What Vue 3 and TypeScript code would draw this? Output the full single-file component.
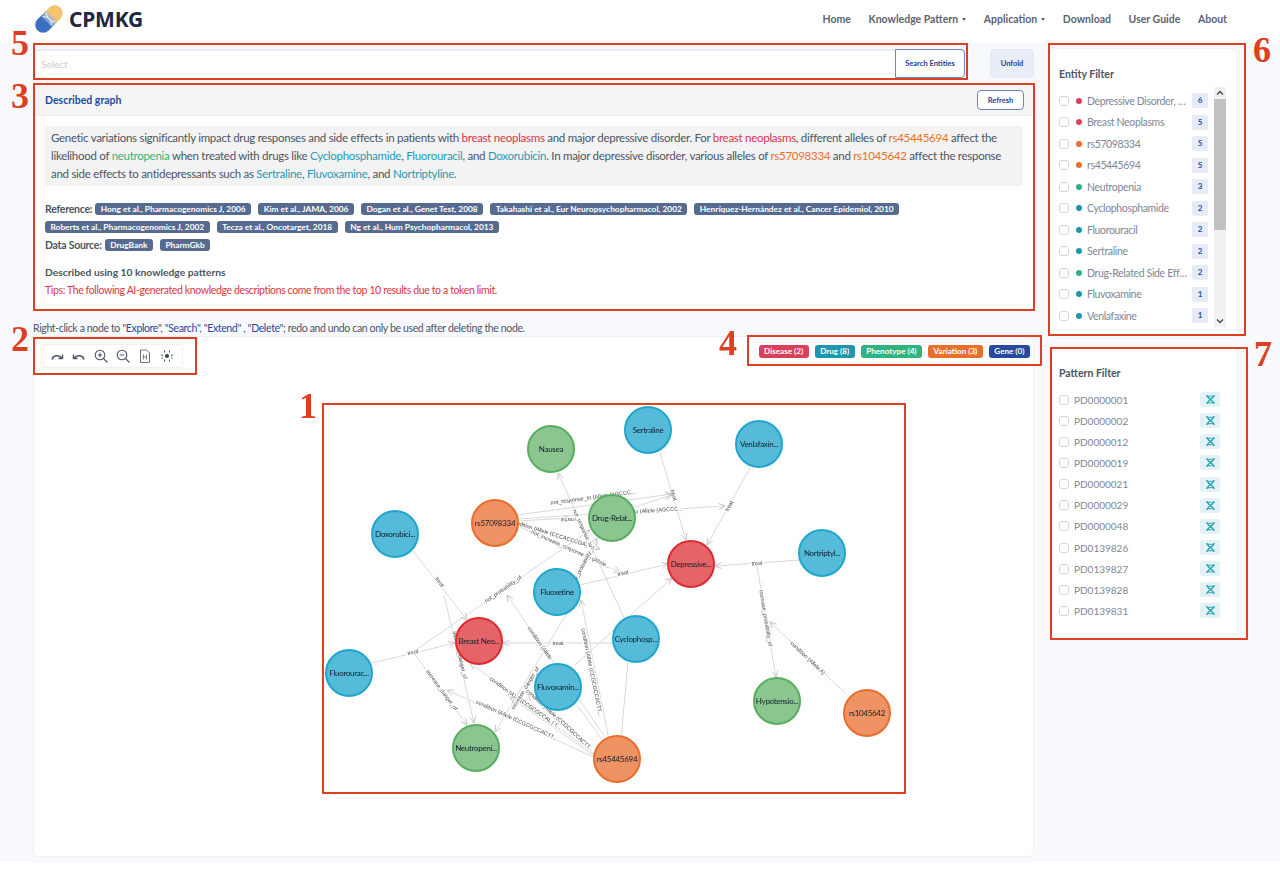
<script setup lang="ts">
type Kind = 'disease' | 'drug' | 'phenotype' | 'variation'

const navItems = [
  { label: 'Home', caret: false },
  { label: 'Knowledge Pattern', caret: true },
  { label: 'Application', caret: true },
  { label: 'Download', caret: false },
  { label: 'User Guide', caret: false },
  { label: 'About', caret: false },
]

const refRowOne = [
  'Hong et al., Pharmacogenomics J, 2006',
  'Kim et al., JAMA, 2006',
  'Dogan et al., Genet Test, 2008',
  'Takahashi et al., Eur Neuropsychopharmacol, 2002',
  'Henríquez-Hernández et al., Cancer Epidemiol, 2010',
]
const refRowTwo = [
  'Roberts et al., Pharmacogenomics J, 2002',
  'Tecza et al., Oncotarget, 2018',
  'Ng et al., Hum Psychopharmacol, 2013',
]

const legend = [
  { label: 'Disease (2)', cls: 'disease' },
  { label: 'Drug (8)', cls: 'drug' },
  { label: 'Phenotype (4)', cls: 'phenotype' },
  { label: 'Variation (3)', cls: 'variation' },
  { label: 'Gene (0)', cls: 'gene' },
]

const entities: { name: string; kind: Kind; count: number }[] = [
  { name: 'Depressive Disorder, …', kind: 'disease', count: 6 },
  { name: 'Breast Neoplasms', kind: 'disease', count: 5 },
  { name: 'rs57098334', kind: 'variation', count: 5 },
  { name: 'rs45445694', kind: 'variation', count: 5 },
  { name: 'Neutropenia', kind: 'phenotype', count: 3 },
  { name: 'Cyclophosphamide', kind: 'drug', count: 2 },
  { name: 'Fluorouracil', kind: 'drug', count: 2 },
  { name: 'Sertraline', kind: 'drug', count: 2 },
  { name: 'Drug-Related Side Eff…', kind: 'phenotype', count: 2 },
  { name: 'Fluvoxamine', kind: 'drug', count: 1 },
  { name: 'Venlafaxine', kind: 'drug', count: 1 },
]

const patterns = [
  'PD0000001', 'PD0000002', 'PD0000012', 'PD0000019', 'PD0000021', 'PD0000029',
  'PD0000048', 'PD0139826', 'PD0139827', 'PD0139828', 'PD0139831',
]

// Graph coordinates are page-relative values minus the origin of the canvas (33, 336)
const OX = 33
const OY = 336
const nodeStyles: Record<Kind, { fill: string; stroke: string }> = {
  disease: { fill: '#e56467', stroke: '#dc2a2e' },
  drug: { fill: '#55bbd8', stroke: '#1fa6cc' },
  phenotype: { fill: '#8bc58f', stroke: '#58ad5e' },
  variation: { fill: '#ef9364', stroke: '#e96d2b' },
}
const nodes = ([
  ['Nausea', 551, 449, 'phenotype'],
  ['Sertraline', 648, 430, 'drug'],
  ['Venlafaxin...', 759, 444, 'drug'],
  ['rs57098334', 495, 523, 'variation'],
  ['Drug-Relat...', 612, 518, 'phenotype'],
  ['Doxorubici...', 395, 534, 'drug'],
  ['Depressive...', 691, 564, 'disease'],
  ['Nortriptyl...', 822, 553, 'drug'],
  ['Fluoxetine', 557, 592, 'drug'],
  ['Cyclophosp...', 636, 639, 'drug'],
  ['Breast Neo...', 479, 641, 'disease'],
  ['Fluorourac...', 349, 673, 'drug'],
  ['Fluvoxamin...', 558, 687, 'drug'],
  ['Hypotensio...', 777, 701, 'phenotype'],
  ['rs1045642', 867, 713, 'variation'],
  ['Neutropeni...', 476, 748, 'phenotype'],
  ['rs45445694', 617, 759, 'variation'],
] as [string, number, number, Kind][]).map(([label, x, y, kind]) => ({
  label,
  x: x - OX,
  y: y - OY,
  ...nodeStyles[kind],
}))

// x1, y1, x2, y2, label, label x, label y
const rawEdges: [number, number, number, number, string, number, number][] = [
  [660, 453, 686, 540, 'treat', 674, 495],
  [750, 468, 707, 545, 'treat', 729, 506],
  [800, 560, 715, 566, 'treat', 757, 563],
  [757, 566, 776, 677, 'increase_probability_of', 766, 618],
  [845, 693, 770, 622, 'condition (Allele A)', 808, 658],
  [517, 515, 672, 494, 'not_response_to (Allele (AGCCC...', 593, 497],
  [635, 507, 672, 495, '', 0, 0],
  [518, 519, 725, 506, 'not_response_to (Allele (AGCCC...', 640, 511],
  [518, 521, 570, 518, 'increa', 568, 519],
  [520, 524, 600, 549, 'condition (Allele (CCCACCCGA)T...', 553, 534],
  [520, 527, 620, 572, 'not_increase_response_to (Allele...', 571, 549],
  [580, 585, 668, 564, 'treat', 623, 573],
  [575, 665, 672, 578, '', 0, 0],
  [413, 551, 467, 620, 'treat', 440, 582],
  [444, 595, 474, 723, 'increase_danger_of', 460, 655],
  [372, 663, 455, 643, 'treat', 413, 652],
  [413, 652, 467, 725, 'increase_danger_of', 442, 690],
  [613, 643, 503, 643, 'treat', 558, 643],
  [413, 652, 590, 530, 'not_probability_of', 503, 589],
  [570, 590, 597, 538, 'increase_probability_of', 580, 570],
  [625, 620, 558, 473, 'not_response_to', 583, 528],
  [567, 613, 495, 732, 'increase_danger_of', 525, 688],
  [605, 737, 507, 595, 'condition (Allele', 540, 643],
  [610, 745, 581, 600, 'condition (Allele (CCGCGCCACTT...', 592, 672],
  [600, 758, 470, 663, 'condition (A)', 503, 687],
  [600, 760, 528, 694, 'condition (Allele (CCGCGCCACTT...', 560, 720],
  [600, 760, 510, 697, '(CCGCGCCAL ( T...', 541, 714],
  [600, 760, 447, 690, 'condition (Allele (CCGCGCCACTT...', 517, 720],
  [577, 705, 608, 748, '', 0, 0],
  [628, 662, 620, 750, '', 0, 0],
]

const edges = rawEdges.map(([a, b, c, d, label, lx, ly]) => {
  const x1 = a - OX
  const y1 = b - OY
  const x2 = c - OX
  const y2 = d - OY
  const ang = Math.atan2(y2 - y1, x2 - x1)
  const head = 7
  const spread = 0.45
  const p = (s: number) =>
    `${x2 - head * Math.cos(ang + s)},${y2 - head * Math.sin(ang + s)}`
  let deg = (ang * 180) / Math.PI
  if (deg > 90) deg -= 180
  if (deg < -90) deg += 180
  return {
    x1,
    y1,
    x2,
    y2,
    arrow: `${p(spread)} ${x2},${y2} ${p(-spread)}`,
    label,
    transform: `translate(${lx - OX} ${ly - OY}) rotate(${deg.toFixed(1)})`,
  }
})
</script>

<template>
  <div class="page">
    <header class="nav">
      <div class="brand">
        <svg class="logo" width="32" height="28" viewBox="0 0 36 32" aria-hidden="true">
          <g transform="rotate(-45 18 16)">
            <path d="M18 7H8.500a9 9 0 0 0 0 18H18Z" fill="#3b6fc4" />
            <path d="M18 7h9.500a9 9 0 0 1 0 18H18Z" fill="#f4c271" />
            <path d="M14 7h8v18h-8Z" fill="#9bb4d8" opacity=".75" />
            <path d="M15 9c4 3 4 11 0 14M21 9c-4 3-4 11 0 14" fill="none" stroke="#fff" stroke-width="1" />
          </g>
        </svg>
        <span class="brand-name">CPMKG</span>
      </div>
      <nav class="nav-links">
        <span v-for="item in navItems" :key="item.label" class="nav-link" :class="{ caret: item.caret }">{{ item.label }}</span>
      </nav>
    </header>

    <main class="main">
      <section class="left">
        <div class="search-row">
          <div class="search">
            <span class="placeholder">Select</span>
            <button class="search-btn" type="button">Search Entities</button>
          </div>
          <button class="unfold" type="button">Unfold</button>
        </div>

        <article class="described">
          <div class="described-head">
            <span class="described-title">Described graph</span>
            <button class="refresh" type="button">Refresh</button>
          </div>
          <div class="described-body">
            <p class="summary">
              Genetic variations significantly impact drug responses and side effects in patients with
              <span class="t-disease">breast neoplasms</span> and major depressive disorder. For
              <span class="t-disease">breast neoplasms</span>, different alleles of
              <span class="t-variation">rs45445694</span> affect the likelihood of
              <span class="t-phenotype">neutropenia</span> when treated with drugs like
              <span class="t-drug">Cyclophosphamide</span>, <span class="t-drug">Fluorouracil</span>, and
              <span class="t-drug">Doxorubicin</span>. In major depressive disorder, various alleles of
              <span class="t-variation">rs57098334</span> and <span class="t-variation">rs1045642</span>
              affect the response and side effects to antidepressants such as
              <span class="t-drug">Sertraline</span>, <span class="t-drug">Fluvoxamine</span>, and
              <span class="t-drug">Nortriptyline</span>.
            </p>
            <div class="ref-row">
              <strong class="ref-label">Reference:</strong>
              <span v-for="r in refRowOne" :key="r" class="tag">{{ r }}</span>
            </div>
            <div class="ref-row">
              <span v-for="r in refRowTwo" :key="r" class="tag">{{ r }}</span>
            </div>
            <div class="ref-row">
              <strong class="ref-label">Data Source:</strong>
              <span class="tag">DrugBank</span>
              <span class="tag">PharmGkb</span>
            </div>
            <div class="using">Described using 10 knowledge patterns</div>
            <div class="tips">Tips: The following AI-generated knowledge descriptions come from the top 10 results due to a token limit.</div>
          </div>
        </article>

        <p class="hint">
          Right-click a node to "<b>Explore</b>", "<b>Search</b>", "<b>Extend</b>" , "<b>Delete</b>"; redo and undo can only be used after deleting the node.
        </p>

        <div class="canvas">
          <div class="canvas-top">
            <div class="toolbar">
              <svg width="16" height="16" viewBox="0 0 16 16"><path d="M3 11.500C4 7 10 6.500 13 10M13.500 6.500v4h-4" fill="none" stroke="#4b5563" stroke-width="1.400" /></svg>
              <svg width="16" height="16" viewBox="0 0 16 16"><path d="M13 11.500C12 7 6 6.500 3 10M2.500 6.500v4h4" fill="none" stroke="#4b5563" stroke-width="1.400" /></svg>
              <svg width="16" height="16" viewBox="0 0 16 16"><circle cx="7" cy="7" r="4.800" fill="none" stroke="#4b5563" stroke-width="1.100" /><path d="M10.500 10.500l4 4M4.800 7h4.400M7 4.800v4.400" fill="none" stroke="#4b5563" stroke-width="1.100" /></svg>
              <svg width="16" height="16" viewBox="0 0 16 16"><circle cx="7" cy="7" r="4.800" fill="none" stroke="#4b5563" stroke-width="1.100" /><path d="M10.500 10.500l4 4M4.800 7h4.400" fill="none" stroke="#4b5563" stroke-width="1.100" /></svg>
              <svg width="16" height="16" viewBox="0 0 16 16"><path d="M3.500 2h6l3 3v9.500h-9Z" fill="none" stroke="#6b7280" stroke-width="1" /><path d="M6.500 6.500v5M9.500 6.500v5M6.500 9h3" fill="none" stroke="#6b7280" stroke-width=".9" /></svg>
              <svg width="16" height="16" viewBox="0 0 16 16"><circle cx="8" cy="8" r="2" fill="#374151" /><path d="M5.500 2.500v2M10.500 2.500v2M5.500 11.500v2M10.500 11.500v2M2 7l2 .6M14 7l-2 .6M2.500 10.500l1.500-1M13.500 10.500l-1.500-1" fill="none" stroke="#4b5563" stroke-width="1" /></svg>
            </div>
            <div class="legend">
              <span v-for="l in legend" :key="l.label" class="legend-tag" :class="l.cls">{{ l.label }}</span>
            </div>
          </div>

          <svg class="graph" width="1001" height="520" viewBox="0 0 1001 520">
            <g v-for="(e, i) in edges" :key="i">
              <line :x1="e.x1" :y1="e.y1" :x2="e.x2" :y2="e.y2" stroke="#d9d9d9" stroke-width="1" />
              <polyline :points="e.arrow" fill="none" stroke="#c4c4c4" stroke-width="1" />
              <text v-if="e.label" class="edge-label" :transform="e.transform" text-anchor="middle" dy="2">{{ e.label }}</text>
            </g>
            <g v-for="n in nodes" :key="n.label">
              <circle :cx="n.x" :cy="n.y" r="23" :fill="n.fill" :stroke="n.stroke" stroke-width="2" />
              <text class="node-label" :x="n.x" :y="n.y" text-anchor="middle" dy="3">{{ n.label }}</text>
            </g>
          </svg>
        </div>
      </section>

      <aside class="right">
        <section class="card entity-card">
          <h3 class="card-title">Entity Filter</h3>
          <div class="entity-wrap">
            <ul class="list">
              <li v-for="e in entities" :key="e.name" class="row">
                <span class="check"></span>
                <span class="dot" :class="'d-' + e.kind"></span>
                <span class="name">{{ e.name }}</span>
                <span class="count">{{ e.count }}</span>
              </li>
            </ul>
            <div class="scrollbar">
              <svg width="12" height="12" viewBox="0 0 12 12"><path d="M3 7.500L6 4.500l3 3" fill="none" stroke="#444" stroke-width="1.300" /></svg>
              <div class="track"><div class="thumb"></div></div>
              <svg width="12" height="12" viewBox="0 0 12 12"><path d="M3 4.500l3 3 3-3" fill="none" stroke="#444" stroke-width="1.300" /></svg>
            </div>
          </div>
        </section>

        <section class="card pattern-card">
          <h3 class="card-title">Pattern Filter</h3>
          <ul class="list">
            <li v-for="p in patterns" :key="p" class="row">
              <span class="check"></span>
              <span class="name pattern-name">{{ p }}</span>
              <span class="dna">
                <svg width="11" height="11" viewBox="0 0 12 12"><path d="M2 1c0 4 8 6 8 10M10 1c0 4-8 6-8 10" fill="none" stroke="#1f9fb3" stroke-width="1.400" /><path d="M2.500 2.500h7M2.500 9.500h7" fill="none" stroke="#1f9fb3" stroke-width="1" /></svg>
              </span>
            </li>
          </ul>
        </section>
      </aside>
    </main>

    <!-- Annotation overlay of the figure -->
    <div class="mark m1"></div><span class="num n1">1</span>
    <div class="mark m2"></div><span class="num n2">2</span>
    <div class="mark m3"></div><span class="num n3">3</span>
    <div class="mark m4"></div><span class="num n4">4</span>
    <div class="mark m5"></div><span class="num n5">5</span>
    <div class="mark m6"></div><span class="num n6">6</span>
    <div class="mark m7"></div><span class="num n7">7</span>
  </div>
</template>

<style>
html, body { margin: 0; background: #fff; }
</style>

<style scoped>
.page {
  position: relative;
  width: 1280px;
  height: 872px;
  overflow: hidden;
  background: #fff;
  font-family: "Lato", "Noto Sans", sans-serif;
  color: #4b5563;
}
.nav {
  height: 43px;
  display: flex;
  align-items: center;
  justify-content: space-between;
  padding: 0 53px 0 33px;
  background: #fff;
}
.brand { display: flex; align-items: center; }
.logo { margin-top: -6px; }
.brand-name {
  font-family: "Noto Sans", sans-serif;
  font-weight: 700;
  font-size: 21px;
  color: #1c2940;
  letter-spacing: -0.2px;
  margin-left: 4px;
  margin-top: -5px;
}
.nav-links { display: flex; gap: 17.600px; margin-top: -6px; }
.nav-link { font-size: 10.500px; font-weight: 700; color: #5b6470; }
.nav-link.caret::after {
  content: "";
  display: inline-block;
  margin-left: 4px;
  vertical-align: 2px;
  border-top: 3px solid #5b6470;
  border-left: 2.500px solid transparent;
  border-right: 2.500px solid transparent;
}
.main {
  height: 819px;
  box-sizing: border-box;
  background: #f7f9fd;
  padding: 6px 42px 0 33px;
  display: grid;
  grid-template-columns: 1001px 188px;
  column-gap: 16px;
}
.left { display: flex; flex-direction: column; }
.search-row { display: flex; gap: 25px; height: 30px; margin-left: 2px; }
.search {
  width: 930px;
  height: 29px;
  box-sizing: border-box;
  background: #fff;
  border-top: 2px solid #e9edf4;
  display: flex;
  align-items: center;
  justify-content: space-between;
}
.placeholder { font-size: 10px; color: #c8ccd2; margin: -2px 0 0 6px; }
.search-btn {
  width: 70px;
  height: 29px;
  margin-top: -2px;
  background: #fff;
  border: 1.500px solid #6a86c4;
  border-radius: 0 4px 4px 0;
  color: #1f3f93;
  font: 700 7.500px "Lato", sans-serif;
  padding: 0;
}
.unfold {
  width: 44px;
  height: 29px;
  background: #e9edf8;
  border: 1px solid #e3e8f3;
  border-radius: 4px;
  color: #1f3f93;
  font: 700 7.500px "Lato", sans-serif;
  padding: 0;
}
.described {
  margin: 6px 1px 0 2px;
  background: #fff;
  height: 225px;
}
.described-head {
  height: 31px;
  box-sizing: border-box;
  padding: 0 9px 0 10px;
  background: #f5f5f5;
  border-bottom: 1px solid #eeeeee;
  display: flex;
  align-items: center;
  justify-content: space-between;
}
.described-title { font-size: 10.500px; font-weight: 700; color: #254a9e; }
.refresh {
  width: 47px;
  height: 20px;
  background: #fff;
  border: 1.500px solid #6a86c4;
  border-radius: 4px;
  color: #1f3f93;
  font: 700 7.500px "Lato", sans-serif;
  padding: 0;
}
.described-body { padding: 10px 10px 0; }
.summary {
  margin: 0 0 14px;
  padding: 3px 6px;
  background: #f3f3f3;
  border-radius: 3px;
  font-size: 11.500px;
  letter-spacing: -0.28px;
  line-height: 18px;
  color: #4b5563;
}
.t-disease { color: #d8324f; }
.t-variation { color: #e8702a; }
.t-phenotype { color: #2fb380; }
.t-drug { color: #1f9bb3; }
.ref-row {
  display: flex;
  align-items: center;
  gap: 7px;
  height: 18px;
  font-size: 10.500px;
}
.ref-label { font-weight: 700; letter-spacing: -0.25px; color: #4b5563; margin-right: -4px; }
.tag {
  height: 12px;
  line-height: 12px;
  padding: 0 5.500px;
  border-radius: 3px;
  background: #566b8f;
  color: #fff;
  font-size: 8.350px;
  font-weight: 700;
  white-space: nowrap;
}
.using { margin-top: 12px; font-size: 10.300px; font-weight: 700; color: #4b5563; }
.tips { margin-top: 6px; font-size: 10.500px; letter-spacing: -0.37px; color: #dc3545; }
.hint {
  margin: 12px 0 0;
  height: 14px;
  font-size: 10.500px;
  letter-spacing: -0.36px;
  line-height: 12px;
  color: #4b5563;
}
.hint b { font-weight: 400; color: #254a9e; }
.canvas {
  position: relative;
  height: 521px;
  background: #fff;
  border: 1px solid #eef1f6;
  border-radius: 6px;
  box-sizing: border-box;
}
.canvas-top {
  display: flex;
  justify-content: space-between;
  align-items: flex-start;
  padding: 7px 3px 0 7px;
}
.toolbar {
  box-sizing: border-box;
  width: 142px;
  height: 24px;
  display: flex;
  gap: 6px;
  align-items: center;
  padding: 0 7px;
  border: 1px solid #f0f1f3;
  border-radius: 3px;
  background: #fff;
}
.legend { display: flex; gap: 6px; margin-top: 1px; }
.legend-tag {
  height: 13px;
  line-height: 13px;
  padding: 0 5.500px;
  border-radius: 3px;
  color: #fff;
  font-size: 8.100px;
  font-weight: 700;
  white-space: nowrap;
}
.disease { background: #d9415a; }
.drug { background: #1d97ae; }
.phenotype { background: #2fb380; }
.variation { background: #e8702a; }
.gene { background: #274a9e; }
.graph { position: absolute; left: -1px; top: -1px; will-change: opacity; }
.edge-label {
  font: 5.500px "Liberation Sans", sans-serif;
  fill: #444;
  paint-order: stroke;
  stroke: #fff;
  stroke-width: 2px;
}
.node-label { font: 8px "Lato", sans-serif; letter-spacing: -0.3px; fill: #10202c; }
.right { display: flex; flex-direction: column; }
.card {
  box-sizing: border-box;
  width: 187px;
  background: #fff;
  border-radius: 5px;
  box-shadow: 0 0 2px rgba(210, 216, 228, 0.6);
  padding: 0 9px;
}
.entity-card { height: 288px; }
.pattern-card { height: 288px; margin-top: 11px; }
.card-title {
  margin: 0;
  padding-top: 19px;
  font-size: 10.500px;
  line-height: 12px;
  font-weight: 700;
  color: #4b5563;
}
.entity-wrap { display: flex; margin-top: 7px; margin-right: 2px; gap: 6px; }
.list { list-style: none; margin: 0; padding: 0; flex: 1; min-width: 0; }
.entity-card .list { padding: 3px 0 0; }
.entity-card .row { height: 21.500px; }
.pattern-card .list { margin-top: 10px; padding-right: 8px; }
.row { height: 21.150px; display: flex; align-items: center; }
.check {
  width: 8px;
  height: 8px;
  border: 1px solid #d4d6da;
  border-radius: 3px;
  flex: none;
  background: #fff;
}
.dot { width: 6px; height: 6px; border-radius: 50%; margin: 0 5px 0 7px; flex: none; }
.d-disease { background: #d9415a; }
.d-drug { background: #1d97ae; }
.d-phenotype { background: #2fb380; }
.d-variation { background: #e8702a; }
.name {
  flex: 1;
  font-size: 10.500px;
  letter-spacing: -0.35px;
  color: #7d8799;
  white-space: nowrap;
  overflow: hidden;
}
.pattern-name { margin-left: 5px; font-size: 10px; letter-spacing: 0; }
.count {
  width: 16px;
  height: 15px;
  line-height: 15px;
  text-align: center;
  flex: none;
  border-radius: 2px;
  background: #e6ebf7;
  color: #254a9e;
  font-size: 8px;
  font-weight: 700;
}
.dna {
  width: 20px;
  height: 15px;
  flex: none;
  background: #e3f3f5;
  border-radius: 2px;
  display: flex;
  align-items: center;
  justify-content: center;
}
.scrollbar {
  width: 12px;
  height: 240px;
  background: #f1f1f1;
  display: flex;
  flex-direction: column;
  flex: none;
}
.track { flex: 1; }
.thumb { height: 131px; background: #c1c1c1; }
.mark { position: absolute; box-sizing: border-box; border: 2px solid #dd3f20; pointer-events: none; }
.m1 { left: 322px; top: 403px; width: 584px; height: 391px; }
.m2 { left: 33px; top: 337px; width: 164px; height: 38px; }
.m3 { left: 33px; top: 83px; width: 1002px; height: 228px; }
.m4 { left: 747px; top: 335px; width: 295px; height: 31px; }
.m5 { left: 33px; top: 43px; width: 935px; height: 37px; }
.m6 { left: 1048px; top: 43px; width: 198px; height: 293px; }
.m7 { left: 1050px; top: 347px; width: 198px; height: 293px; }
.num {
  position: absolute;
  font-family: "Liberation Serif", serif;
  font-weight: 700;
  font-size: 36px;
  line-height: 36px;
  color: #dd3f20;
}
.n1 { left: 299px; top: 388px; }
.n2 { left: 11px; top: 321px; }
.n3 { left: 11px; top: 78px; }
.n4 { left: 719px; top: 325px; }
.n5 { left: 11px; top: 25px; }
.n6 { left: 1253px; top: 32px; }
.n7 { left: 1254px; top: 336px; }
</style>
